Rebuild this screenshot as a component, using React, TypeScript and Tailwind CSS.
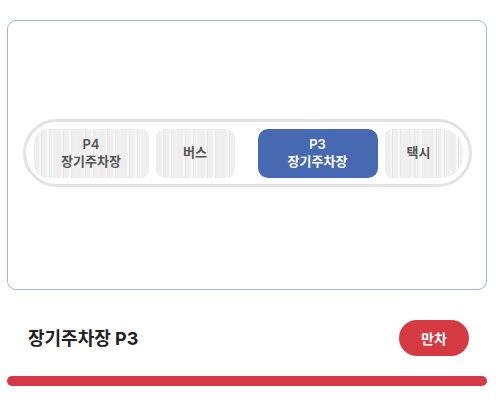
import React from "react";

const stripe =
  "bg-[repeating-linear-gradient(90deg,#eeeeee_0px,#eeeeee_5px,#f6f6f6_5px,#f6f6f6_7px,#e4e4e4_7px,#e4e4e4_8px,#efefef_8px,#efefef_13px,#f8f8f8_13px,#f8f8f8_15px,#e6e6e6_15px,#e6e6e6_16px,#f0f0f0_16px,#f0f0f0_22px)]";

export default function App() {
  return (
    <div
      className="w-[496px] h-[406px] bg-white px-[7px] pt-[20px]"
      style={{ fontFamily: 'Inter, "Noto Sans CJK KR", sans-serif' }}
    >
      <div className="h-[270px] w-[480px] rounded-[9px] border border-[#a7b8cb] flex items-center justify-center">
        <div className="mb-[4px] w-[449px] h-[68px] rounded-full border-[3px] border-[#e3e3e3] flex items-center pl-[8px] pr-[6px]">
          <div
            className={`w-[115px] h-[49px] rounded-l-[14px] rounded-r-[8px] ${stripe} flex flex-col items-center justify-center text-[13px] leading-[17px] font-semibold text-[#555]`}
          >
            <span>P4</span>
            <span>장기주차장</span>
          </div>
          <div
            className={`ml-[7px] w-[79px] h-[49px] rounded-[9px] ${stripe} flex items-center justify-center text-[13px] font-semibold text-[#555]`}
          >
            버스
          </div>
          <div className="ml-[23px] w-[120px] h-[49px] rounded-[10px] bg-[#4769b2] flex flex-col items-center justify-center text-[13px] leading-[17px] font-semibold text-white">
            <span>P3</span>
            <span>장기주차장</span>
          </div>
          <div
            className={`ml-[7px] w-[78px] h-[49px] rounded-l-[6px] rounded-r-[22px] ${stripe} flex items-center justify-center text-[13px] font-semibold text-[#555] pr-[10px]`}
          >
            택시
          </div>
        </div>
      </div>
      <div className="mt-[30px] h-[36px] flex items-center justify-between pl-[21px] pr-[20px]">
        <span className="text-[18px] font-bold text-[#222]">장기주차장 P3</span>
        <span className="w-[70px] h-[36px] rounded-full bg-[#d53a43] text-white text-[14px] font-bold flex items-center justify-center">
          만차
        </span>
      </div>
      <div className="mt-[20px] h-[10px] w-[480px] rounded-full bg-[#d53a44]" />
    </div>
  );
}
